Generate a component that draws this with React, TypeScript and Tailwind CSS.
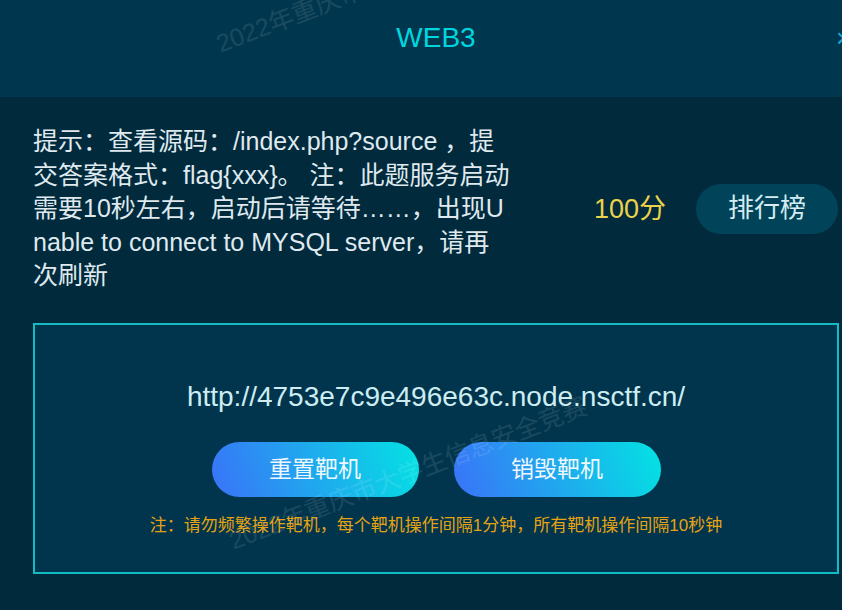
import React from "react";

const font = { fontFamily: '"Liberation Sans", Arial, "Noto Sans CJK SC", sans-serif' };

function Watermark({ className }: { className: string }) {
  return (
    <div
      className={`pointer-events-none absolute whitespace-nowrap text-[25px] text-white/10 ${className}`}
      style={{ transform: "rotate(-21deg)" }}
    >
      2022年重庆市大学生信息安全竞赛
    </div>
  );
}

export default function App() {
  const lines = [
    "提示：查看源码：/index.php?source ，提",
    "交答案格式：flag{xxx}。 注：此题服务启动",
    "需要10秒左右，启动后请等待……，出现U",
    "nable to connect to MYSQL server，请再",
    "次刷新",
  ];
  return (
    <div className="relative h-[610px] w-[842px] overflow-hidden bg-[#012a3d]" style={font}>
      <div className="relative flex h-[97px] justify-center bg-[#00364e] pl-[30px] pt-[21px]">
        <span className="text-[28px] leading-[34px] text-[#00d6df]">WEB3</span>
        <span className="absolute left-[836px] top-[21px] text-[26px] leading-[34px] text-[#1aa9d6]">×</span>
      </div>
      <div className="pl-[33px] pt-[28px]">
        <div className="flex items-center">
          <div className="w-[561px] text-[25px] leading-[33.5px] text-[#dfe9ee]">
            {lines.map((l, i) => (
              <div key={i} className="whitespace-nowrap">{l}</div>
            ))}
          </div>
          <div className="text-[27px] text-[#ecd24a]">100分</div>
          <div className="ml-[30px] flex h-[50px] w-[142px] shrink-0 items-center justify-center rounded-full bg-[#01445a] text-[26px] text-[#d4ecf2]">
            排行榜
          </div>
        </div>
        <div className="mt-[30px] flex h-[251px] w-[806px] flex-col items-center border-2 border-[#13bcc4] bg-[#00354d] pt-[55px]">
          <div className="text-[28px] leading-[34px] text-[#cdedf2]">http://4753e7c9e496e63c.node.nsctf.cn/</div>
          <div className="mt-[28px] flex gap-[35px]">
            <div className="flex h-[55px] w-[207px] items-center justify-center rounded-full bg-linear-[70deg] from-[#3a72f8] to-[#03e3e3] text-[23px] text-[#f0f8ff]">
              重置靶机
            </div>
            <div className="flex h-[55px] w-[207px] items-center justify-center rounded-full bg-linear-[70deg] from-[#3a72f8] to-[#03e3e3] text-[23px] text-[#f0f8ff]">
              销毁靶机
            </div>
          </div>
          <div className="mt-[19px] text-[17px] leading-[20px] text-[#e5a313]">
            注：请勿频繁操作靶机，每个靶机操作间隔1分钟，所有靶机操作间隔10秒钟
          </div>
        </div>
      </div>
      <Watermark className="left-[205px] top-[-42px]" />
      <Watermark className="left-[218px] top-[455px]" />
    </div>
  );
}
